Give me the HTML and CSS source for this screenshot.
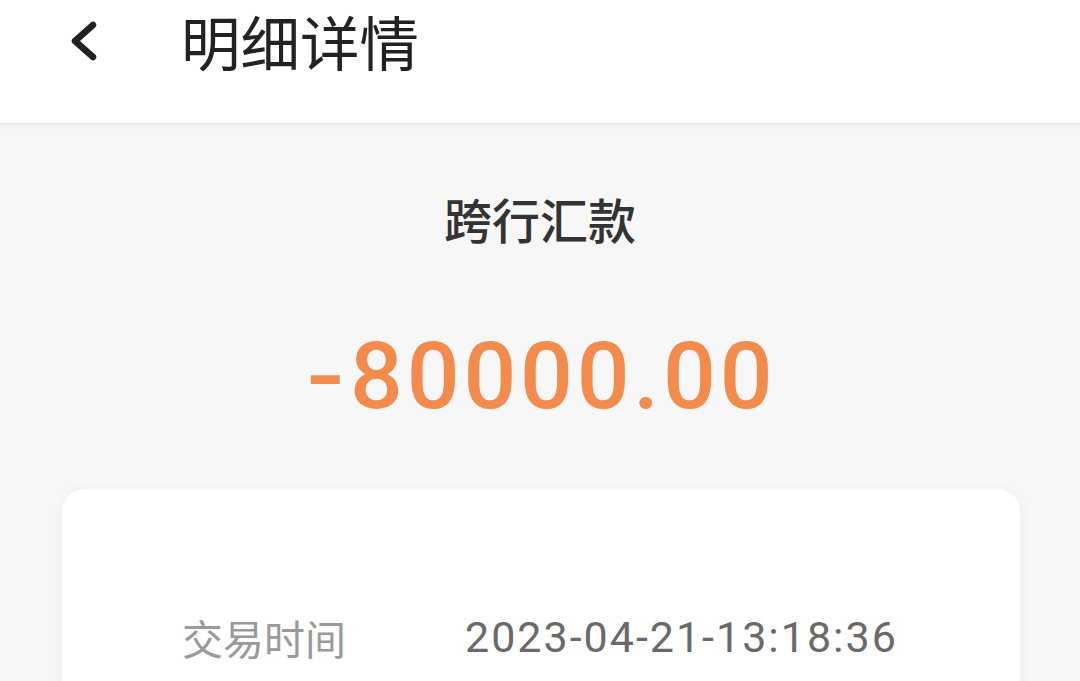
FILE: index.html
```html
<!DOCTYPE html>
<html lang="zh-CN">
<head>
<meta charset="utf-8">
<title>明细详情</title>
<link rel="stylesheet" href="styles.css">
</head>
<body>
<header class="topbar">
  <span class="back" aria-label="返回">
    <svg width="30" height="44" viewBox="0 0 30 44"><path d="M25 6 L7 22 L25 38" fill="none" stroke="#222" stroke-width="6.5" stroke-linecap="round" stroke-linejoin="round"/></svg>
  </span>
  <h1 class="title">明细详情</h1>
</header>
<main class="content">
  <div class="type">跨行汇款</div>
  <div class="amount"><span class="sign">-</span>80000.00</div>
  <section class="card">
    <div class="row">
      <span class="label">交易时间</span>
      <span class="value">2023-04-21-13:18:36</span>
    </div>
  </section>
</main>
</body>
</html>
```
FILE: styles.css
```css
* { box-sizing: border-box; }
html, body {
  margin: 0;
  padding: 0;
  background: #f7f7f7;
  font-family: "Noto Sans CJK SC", "Noto Sans", sans-serif;
  overflow: hidden;
}
.topbar {
  height: 123px;
  background: #fff;
  display: flex;
  align-items: flex-start;
  padding-top: 4px;
  box-shadow: 0 1px 0 #e3e3e3, 0 3px 8px rgba(0,0,0,0.04);
  position: relative;
  z-index: 1;
}
.back {
  display: flex;
  width: 30px;
  height: 44px;
  margin-left: 68px;
  margin-top: 15px;
}
.title {
  margin: 0 0 0 83px;
  font-size: 59.5px;
  line-height: 72px;
  font-weight: 400;
  color: #222;
}
.content {
  display: flex;
  flex-direction: column;
  align-items: center;
}
.type {
  margin-top: 71px;
  font-size: 48px;
  line-height: 48px;
  font-weight: 500;
  color: #333;
}
.amount {
  margin-top: 88px;
  padding-left: 6px;
  font-family: Roboto, "Liberation Sans", sans-serif;
  font-size: 93px;
  line-height: 93px;
  font-weight: 500;
  letter-spacing: 3.8px;
  color: #f28b4c;
}
.sign {
  display: inline-block;
  transform: scaleX(1.2);
  margin-right: 5px;
}
.card {
  align-self: stretch;
  margin: 66px 60px 0 62px;
  background: #fff;
  border-radius: 22px;
  box-shadow: 0 0 14px rgba(0,0,0,0.04);
  padding: 118px 0 60px 120px;
  min-height: 300px;
}
.row {
  display: flex;
  align-items: center;
  height: 60px;
}
.label {
  width: 283px;
  font-size: 41px;
  line-height: 41px;
  color: #9a9a9a;
}
.value {
  font-family: Roboto, "Liberation Sans", sans-serif;
  font-size: 43px;
  line-height: 43px;
  letter-spacing: 2px;
  color: #6a6a6a;
}
```
